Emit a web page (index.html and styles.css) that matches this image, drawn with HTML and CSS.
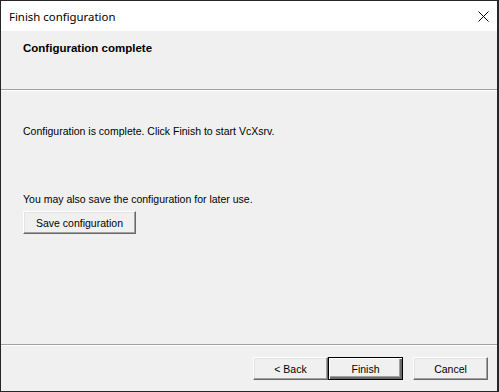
FILE: index.html
```html
<!DOCTYPE html>
<html lang="en">
<head>
    <meta charset="UTF-8">
    <title>Finish configuration</title>
    <link rel="stylesheet" href="styles.css">
</head>
<body>
    <div class="window">
        <div class="titlebar">
            <span class="title">Finish configuration</span>
            <svg class="close" width="11" height="11" viewBox="0 0 11 11">
                <path d="M0.5 0.5 L10.5 10.5 M10.5 0.5 L0.5 10.5" stroke="#000" stroke-width="1" fill="none"/>
            </svg>
        </div>

        <div class="header">
            <h1>Configuration complete</h1>
        </div>
        <div class="separator"></div>

        <div class="content">
            <p class="intro">Configuration is complete. Click Finish to start VcXsrv.</p>
            <p class="save-note">You may also save the configuration for later use.</p>
            <button class="btn btn-save">Save configuration</button>
        </div>

        <div class="separator"></div>
        <div class="footer">
            <button class="btn">&lt; Back</button>
            <button class="btn btn-default">Finish</button>
            <button class="btn btn-cancel">Cancel</button>
        </div>
    </div>
</body>
</html>
```

FILE: styles.css
```css
html, body {
    margin: 0;
    padding: 0;
    background-color: #262626;
}

.window {
    width: 496px;
    height: 390px;
    margin: 1px 0 0 1px;
    background-color: #f0f0f0;
    display: flex;
    flex-direction: column;
    font-family: 'Liberation Sans', Arial, sans-serif;
    font-size: 10.5px;
    color: #000;
}

.titlebar {
    height: 30px;
    flex: none;
    background-color: #fff;
    display: flex;
    align-items: center;
    justify-content: space-between;
    padding: 0 8px 0 8px;
}

.title {
    font-family: 'Noto Sans', sans-serif;
    font-size: 11.4px;
    color: #000;
}

.close {
    display: block;
}

.header {
    height: 58px;
    flex: none;
    padding: 11px 0 0 22px;
    box-sizing: border-box;
}

.header h1 {
    margin: 0;
    font-size: 11.5px;
    font-weight: bold;
}

.separator {
    height: 1px;
    flex: none;
    background-color: #a0a0a0;
    border-bottom: 1px solid #fff;
}

.content {
    height: 253px;
    flex: none;
    box-sizing: border-box;
    padding: 34px 0 0 22px;
}

.content p {
    margin: 0;
}

.save-note {
    margin-top: 56px !important;
}

.btn {
    font-family: 'Liberation Sans', Arial, sans-serif;
    font-size: 10.5px;
    color: #000;
    width: 75px;
    height: 23px;
    padding: 0;
    background-color: #f0f0f0;
    border: 1px solid;
    border-color: #fff #696969 #696969 #fff;
    box-shadow: inset -1px -1px 0 #a0a0a0, inset 1px 1px 0 #e3e3e3;
}

.btn-save {
    width: 113px;
    margin-top: 6px;
}

.btn-default {
    border: 1px solid #000;
    box-shadow: inset 1px 1px 0 #fff, inset -2px -2px 0 #696969, inset -3px -3px 0 #a0a0a0;
}

.btn-cancel {
    margin-left: 10px;
}

.footer {
    flex: 1;
    display: flex;
    align-items: flex-start;
    padding: 11px 0 0 252px;
}
```
